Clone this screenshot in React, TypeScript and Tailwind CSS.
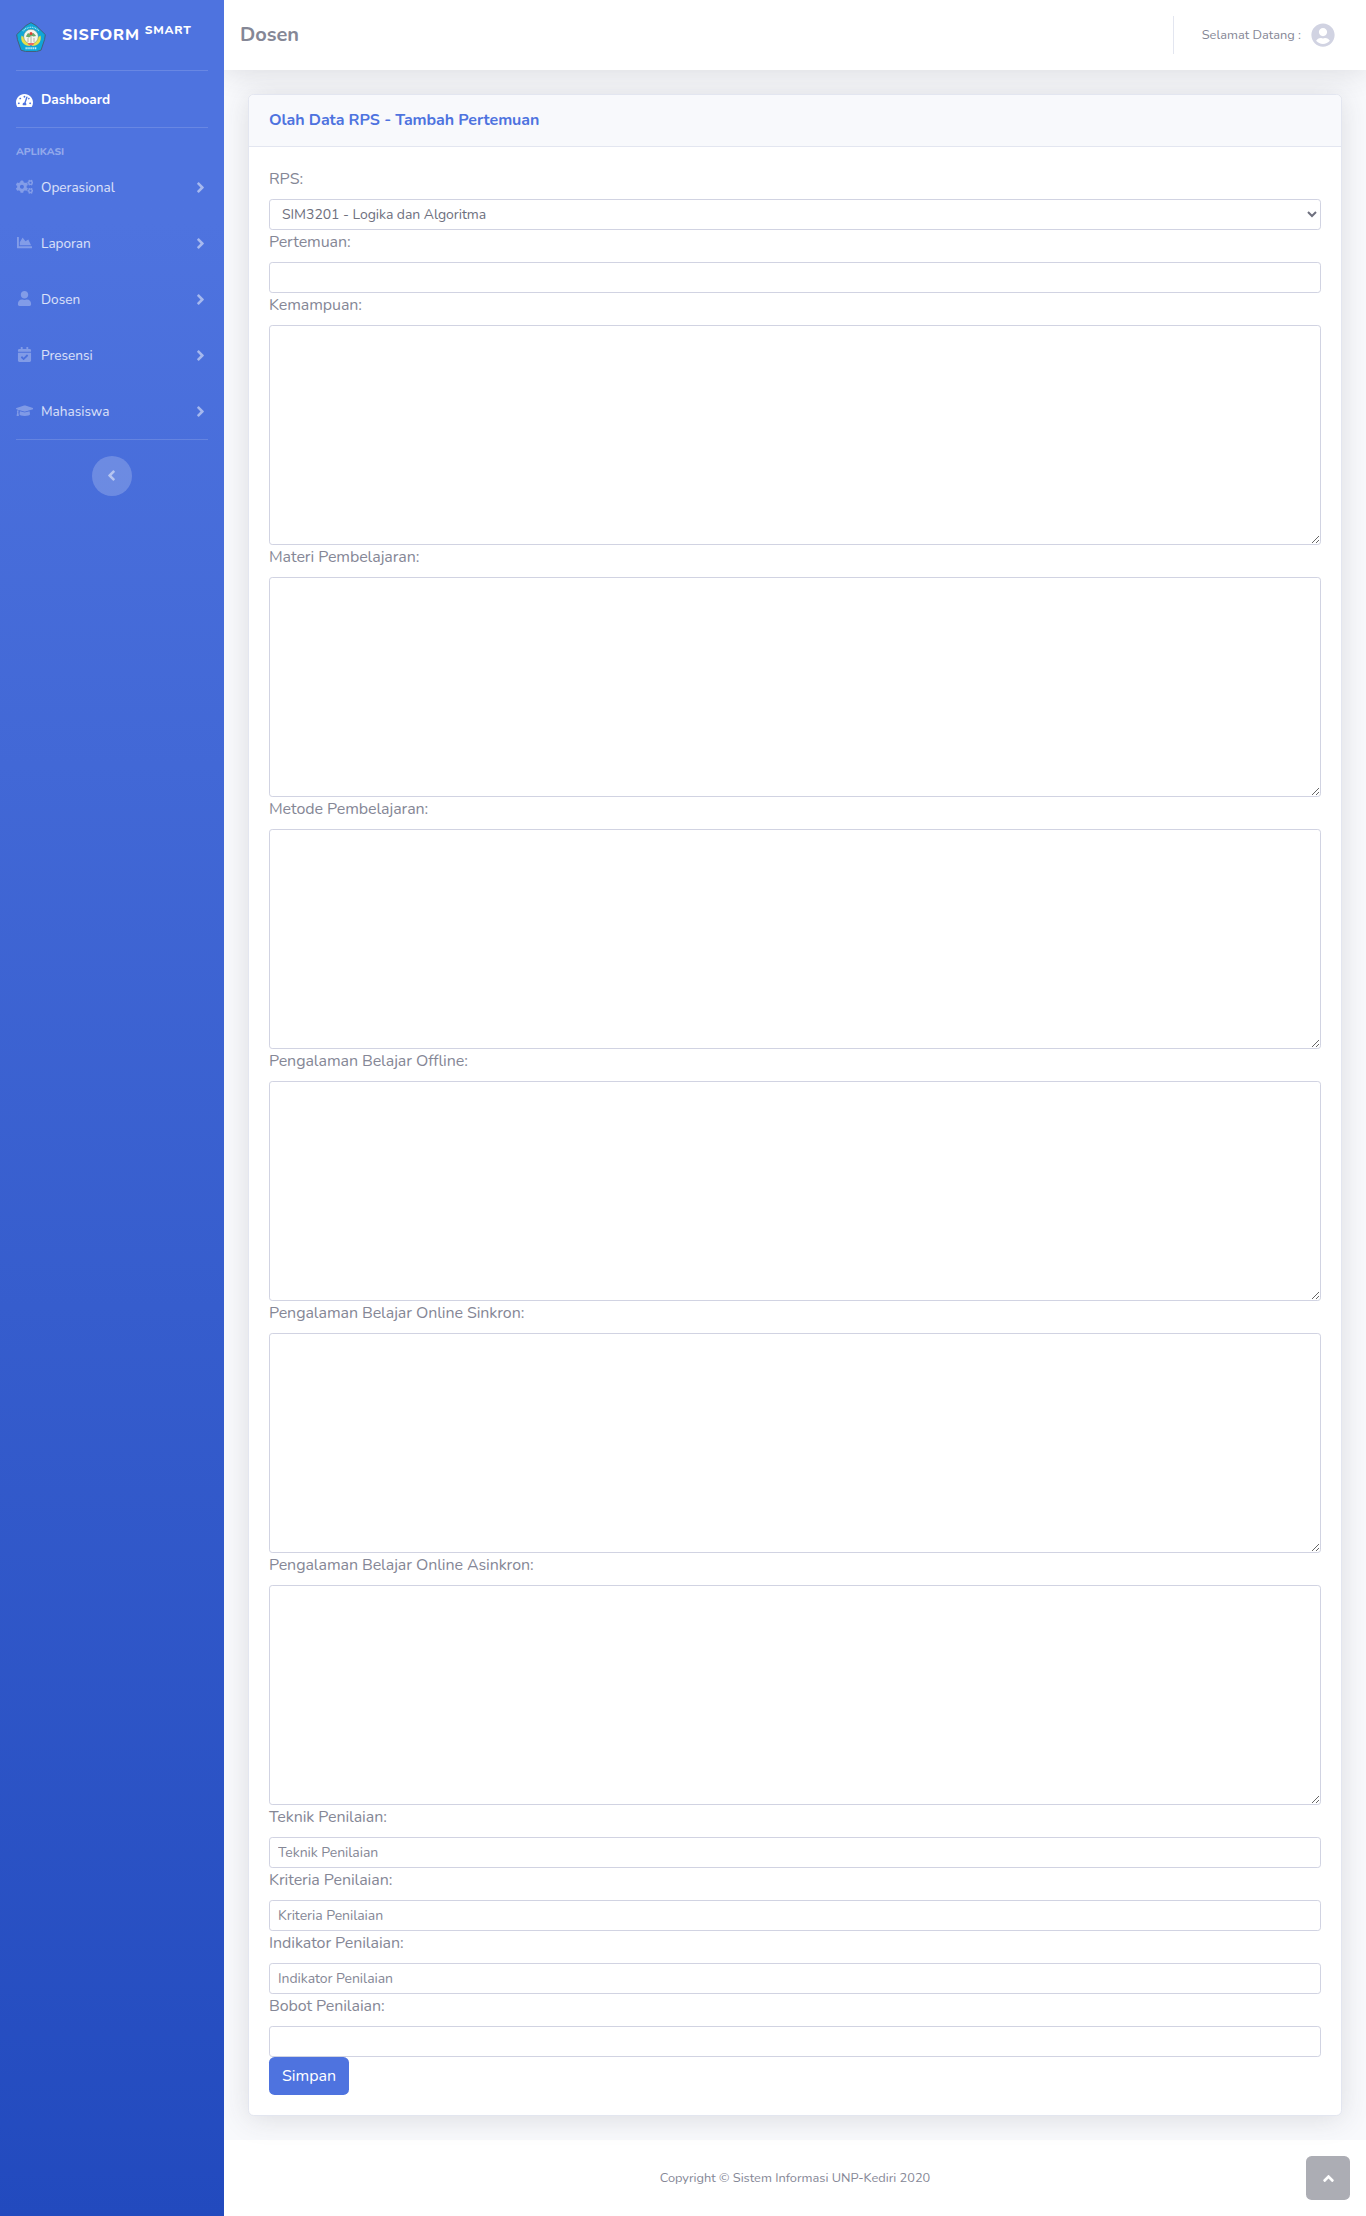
import {
  FaAngleLeft,
  FaAngleRight,
  FaAngleUp,
  FaCalendarCheck,
  FaChartArea,
  FaCogs,
  FaGraduationCap,
  FaTachometerAlt,
  FaUser,
  FaUserCircle,
} from "react-icons/fa";

const menu = [
  { label: "Operasional", Icon: FaCogs },
  { label: "Laporan", Icon: FaChartArea },
  { label: "Dosen", Icon: FaUser },
  { label: "Presensi", Icon: FaCalendarCheck },
  { label: "Mahasiswa", Icon: FaGraduationCap },
];

const areas = [
  "Kemampuan",
  "Materi Pembelajaran",
  "Metode Pembelajaran",
  "Pengalaman Belajar Offline",
  "Pengalaman Belajar Online Sinkron",
  "Pengalaman Belajar Online Asinkron",
];

const control =
  "block w-full rounded-[3.2px] border border-[#d1d3e2] bg-white text-sm leading-[21px] tracking-[-0.05px] text-[#6e707e] placeholder:text-[#858796] placeholder:opacity-100";

function Label({ text }: { text: string }) {
  return <label className="mb-2 block h-6 leading-6 tracking-[-0.08px]">{text}:</label>;
}

function TextField({ label, placeholder }: { label: string; placeholder?: string }) {
  return (
    <div>
      <Label text={label} />
      <input type="text" placeholder={placeholder} className={`${control} h-[31px] px-2 py-1`} />
    </div>
  );
}

function Crest() {
  return (
    <svg viewBox="0 0 30 30" className="size-[30px] shrink-0">
      <path d="M15 .6 20 3.5 29.3 12.6 28.6 17.5 25 28.2 20.5 29.5H9.5L5 28.2 1.4 17.5 .7 12.6 10 3.5Z" fill="#0fa6d8" stroke="#44607c" strokeWidth="1" strokeLinejoin="round" />
      <path d="M6.8 9.2A10.5 10.5 0 0 1 23.2 9.2" fill="none" stroke="#a5e2f0" strokeWidth="1.3" strokeDasharray="1 .7" />
      <path d="M5.5 13.5c-1.5 6 2.5 10.5 8.5 10.5l1-3-5-4Z" fill="#e6e04a" />
      <path d="M24.5 13.5c1.5 6-2.5 10.5-8.5 10.5l-1-3 5-4Z" fill="#e6e04a" />
      <circle cx="15" cy="14.6" r="7.3" fill="#f4f5ee" stroke="#5d8a78" strokeWidth=".5" />
      <path d="M9.8 14.5 12 11l2 1.2 3.5-1.2 2.7 3-2.7.6-2-.8-2.5 1.6Z" fill="#6aa869" />
      <circle cx="15" cy="11.6" r="1.5" fill="#dc3c35" />
      <path d="M15 14v7M12 16v4M18 16v4" stroke="#a3a695" strokeWidth=".8" />
      <path d="M11.8 21h6.4l-1 2.3h-4.4Z" fill="#ee6a62" />
      <path d="M9.5 26.2h11" stroke="#c4edf6" strokeWidth="2" strokeDasharray="1.3 .6" />
    </svg>
  );
}

function Divider() {
  return <hr className="mx-4 border-t border-white/15" />;
}

function Sidebar() {
  return (
    <aside className="flex w-56 shrink-0 flex-col bg-linear-to-b from-[#4e73df] from-10% to-[#224abe] text-[13.6px] leading-[20.4px]">
      <div className="flex h-[70px] items-center px-4 pt-1">
        <Crest />
        <div className="mx-4 flex items-start text-base leading-6 font-extrabold tracking-[0.8px] whitespace-nowrap text-white uppercase">
          <span className="-mt-[5px]">Sisform</span>
          <span className="-mt-[10px] ml-[5px] text-xs leading-6">Smart</span>
        </div>
      </div>
      <Divider />
      <a className="flex h-14 items-center px-4 pt-[2px] font-bold text-white">
        <FaTachometerAlt className="size-[17px] shrink-0" />
        <span className="ml-2 pt-px">Dashboard</span>
      </a>
      <Divider />
      <div className="mt-4 px-4 text-[10.4px] leading-[15.6px] font-extrabold text-white/40 uppercase">Aplikasi</div>
      <nav className="mt-px flex flex-col">
        {menu.map(({ label, Icon }, i) => (
          <a key={label} className={i === menu.length - 1 ? "flex h-[54.4px] items-start px-4 pt-4 text-white/80" : "flex h-14 items-start px-4 pt-4 text-white/80"}>
            <span className="flex h-5 w-[17px] shrink-0 items-center justify-center text-white/30">
              <Icon className={Icon === FaCogs || Icon === FaGraduationCap ? "size-[17.5px] shrink-0" : "size-[15px] shrink-0"} />
            </span>
            <span className="ml-2 pt-px">{label}</span>
            <FaAngleRight className="mt-[2px] -mr-px ml-auto size-[17px] text-white/50" />
          </a>
        ))}
      </nav>
      <Divider />
      <button className="mt-4 flex size-10 items-center justify-center self-center rounded-full bg-white/20 text-white/50">
        <FaAngleLeft className="mr-px size-[17px]" />
      </button>
    </aside>
  );
}

export default function App() {
  return (
    <div className="flex min-h-[2216px] font-['Nunito','Lato',sans-serif] text-base leading-6 text-[#858796]">
      <Sidebar />
      <div className="flex min-w-0 flex-1 flex-col overflow-hidden bg-[#f8f9fc]">
        <header className="relative flex h-[70px] items-center bg-white px-4 shadow-[0_2.4px_28px_0_rgba(58,59,69,0.15)]">
          <h1 className="text-xl font-bold">Dosen</h1>
          <div className="ml-auto h-[38px] w-px bg-[#e3e6f0]" />
          <div className="mr-[15px] ml-7 flex items-center text-[12.8px]">
            <span>Selamat Datang :</span>
            <FaUserCircle className="ml-[10px] size-6 text-[#d1d3e2]" />
          </div>
        </header>
        <main className="p-6">
          <section className="relative rounded-[5.6px] border border-[#e3e6f0] bg-white shadow-[0_2.4px_28px_0_rgba(58,59,69,0.15)]">
            <div className="h-[52px] rounded-t-[5px] border-b border-[#e3e6f0] bg-[#f8f9fc] px-5 pt-[13px]">
              <h2 className="leading-[24px] font-bold tracking-[-0.07px] text-[#4e73df]">Olah Data RPS - Tambah Pertemuan</h2>
            </div>
            <form className="p-5">
              <Label text="RPS" />
              <select className={`${control} h-[31px] py-1 pl-2`}>
                <option>SIM3201 - Logika dan Algoritma</option>
              </select>
              <TextField label="Pertemuan" />
              {areas.map((label) => (
                <div key={label}>
                  <Label text={label} />
                  <textarea className={`${control} h-[220px] resize px-2 py-1`} />
                </div>
              ))}
              <TextField label="Teknik Penilaian" placeholder="Teknik Penilaian" />
              <TextField label="Kriteria Penilaian" placeholder="Kriteria Penilaian" />
              <TextField label="Indikator Penilaian" placeholder="Indikator Penilaian" />
              <TextField label="Bobot Penilaian" />
              <button type="button" className="block h-[38px] rounded-[5.6px] bg-[#4e73df] px-[13px] text-white">
                Simpan
              </button>
            </form>
          </section>
        </main>
        <footer className="flex flex-1 items-center justify-center bg-white text-[12.8px] leading-none">
          Copyright © Sistem Informasi UNP-Kediri 2020
        </footer>
      </div>
      <button className="fixed right-4 bottom-4 flex size-11 items-center justify-center rounded-[5.6px] bg-[#5a5c69]/50 text-white">
        <FaAngleUp className="size-[17px]" />
      </button>
    </div>
  );
}
